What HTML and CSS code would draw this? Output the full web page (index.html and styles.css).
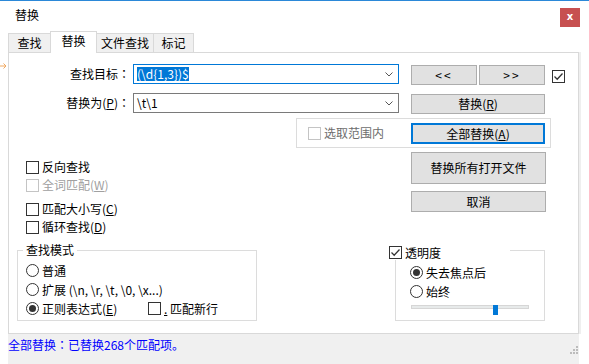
FILE: index.html
```html
<!DOCTYPE html>
<html lang="zh-CN">
<head>
    <meta charset="UTF-8">
    <meta name="viewport" content="width=device-width, initial-scale=1.0">
    <title>替换</title>
    <link rel="stylesheet" href="styles.css">
</head>
<body>
    <div class="titlebar">
        <span class="title">替换</span>
        <span class="close">x</span>
    </div>

    <div class="dialog">
        <div class="gutter">
            <svg class="marker" width="7" height="6" viewBox="0 0 7 6">
                <path d="M0 3h6M3.5 0.5L6 3L3.5 5.5" fill="none" stroke="#f0a860" stroke-width="1"/>
            </svg>
        </div>

        <div class="main">
            <div class="tabs">
                <span class="tab tab-find">查找</span>
                <span class="tab tab-replace active">替换</span>
                <span class="tab tab-files">文件查找</span>
                <span class="tab tab-mark">标记</span>
            </div>

            <div class="panel">
                <!-- 查找目标 -->
                <div class="row row-find">
                    <label class="field-label">查找目标<span class="colon" lang="ja">：</span></label>
                    <div class="combo focused">
                        <span class="value"><span class="sel">(\d{1,3})$</span></span>
                        <svg class="chevron" width="8" height="5" viewBox="0 0 8 5"><path d="M0.5 0.5L4 4L7.5 0.5" fill="none" stroke="#555"/></svg>
                    </div>
                    <button class="btn btn-prev">&lt;&lt;</button>
                    <button class="btn btn-next">&gt;&gt;</button>
                    <span class="box box-solo">
                        <svg width="11" height="11" viewBox="0 0 11 11"><path d="M1.5 5.5L4.2 8.2L9.5 2.5" fill="none" stroke="#333" stroke-width="1.3"/></svg>
                    </span>
                </div>

                <!-- 替换为 -->
                <div class="row row-replace">
                    <label class="field-label">替换为(<u>P</u>)<span class="colon" lang="ja">：</span></label>
                    <div class="combo">
                        <span class="value">\t\1</span>
                        <svg class="chevron" width="8" height="5" viewBox="0 0 8 5"><path d="M0.5 0.5L4 4L7.5 0.5" fill="none" stroke="#555"/></svg>
                    </div>
                    <button class="btn btn-wide">替换(<u>R</u>)</button>
                </div>

                <!-- 选取范围内 -->
                <div class="scope">
                    <span class="opt disabled"><span class="box"></span>选取范围内</span>
                    <button class="btn btn-wide btn-default">全部替换(<u>A</u>)</button>
                </div>

                <div class="lower">
                    <div class="options">
                        <div class="opt"><span class="box"></span>反向查找</div>
                        <div class="opt faded"><span class="box"></span>全词匹配(<u>W</u>)</div>
                        <div class="opt gap"><span class="box"></span>匹配大小写(<u>C</u>)</div>
                        <div class="opt"><span class="box"></span>循环查找(<u>D</u>)</div>
                    </div>
                    <div class="actions">
                        <button class="btn btn-tall">替换所有打开文件</button>
                        <button class="btn btn-cancel">取消</button>
                    </div>
                </div>

                <div class="bottom">
                    <fieldset class="mode">
                        <legend>查找模式</legend>
                        <div class="opt mode-row first"><span class="radio"></span>普通</div>
                        <div class="opt mode-row"><span class="radio"></span>扩展 (\n, \r, \t, \0, \x...)</div>
                        <div class="opt mode-row">
                            <span class="regex"><span class="radio on"></span>正则表达式(<u>E</u>)</span>
                            <span class="box"></span><u>.</u>&nbsp;匹配新行
                        </div>
                    </fieldset>

                    <div class="trans">
                        <div class="trans-title">
                            <span class="box">
                                <svg width="11" height="11" viewBox="0 0 11 11"><path d="M1.5 5.5L4.2 8.2L9.5 2.5" fill="none" stroke="#333" stroke-width="1.3"/></svg>
                            </span>透明度
                        </div>
                        <div class="opt trans-row first"><span class="radio on"></span>失去焦点后</div>
                        <div class="opt trans-row"><span class="radio"></span>始终</div>
                        <div class="slider">
                            <div class="track"></div>
                            <div class="thumb"></div>
                        </div>
                    </div>
                </div>
            </div>

            <div class="status">
                <span class="status-text">全部替换<span class="colon" lang="ja">：</span>已替换268个匹配项。</span>
                <svg class="grip" width="8" height="8" viewBox="0 0 8 8" fill="#bcbcbc">
                    <rect x="6" y="0" width="2" height="2"/>
                    <rect x="3" y="3" width="2" height="2"/>
                    <rect x="6" y="3" width="2" height="2"/>
                    <rect x="0" y="6" width="2" height="2"/>
                    <rect x="3" y="6" width="2" height="2"/>
                    <rect x="6" y="6" width="2" height="2"/>
                </svg>
            </div>
        </div>
    </div>
</body>
</html>
```

FILE: styles.css
```css
/* 基本设置 */
* {
    box-sizing: border-box;
}

body {
    margin: 0;
    width: 589px;
    height: 364px;
    overflow: hidden;
    background: #fff;
    border-top: 1px solid #2b88d8;
    font-family: "Noto Sans CJK SC", "Microsoft YaHei", sans-serif;
    font-size: 12px;
    line-height: 16px;
    color: #000;
}

u {
    text-decoration: underline;
}

/* 全角冒号居中显示 */
.colon {
    font-family: "Noto Sans CJK JP", sans-serif;
}

/* 标题栏 */
.titlebar {
    height: 30px;
    display: flex;
    justify-content: space-between;
    align-items: flex-start;
    padding: 0 9px 0 15px;
}

.title {
    margin-top: 6px;
}

.close {
    margin-top: 7px;
    width: 20px;
    height: 19px;
    background: #c75050;
    color: #fff;
    font-family: "DejaVu Sans", sans-serif;
    font-weight: bold;
    font-size: 10px;
    line-height: 17px;
    text-align: center;
}

.dialog {
    display: flex;
}

.gutter {
    width: 8px;
}

.marker {
    display: block;
    margin-top: 32px;
}

.main {
    width: 571px;
}

/* 选项卡 */
.tabs {
    display: flex;
    align-items: flex-end;
    height: 21px;
}

.tab {
    height: 19px;
    margin-left: -1px;
    border: 1px solid #d9d9d9;
    border-bottom: none;
    background: #f0f0f0;
    text-align: center;
    line-height: 18px;
}

.tab-find { width: 43px; margin-left: 0; }
.tab-replace { width: 47px; }
.tab-files { width: 58px; }
.tab-mark { width: 41px; }

.tab.active {
    height: 22px;
    margin-bottom: -1px;
    position: relative;
    z-index: 1;
    background: #fff;
    line-height: 18px;
}

.panel {
    height: 282px;
    border: 1px solid #d9d9d9;
    box-shadow: 2px 0 0 #efefef;
}

/* 输入行 */
.row {
    display: flex;
    align-items: flex-start;
}

.row-find {
    margin-top: 11px;
}

.row-replace {
    margin-top: 8px;
}

.field-label {
    width: 121px;
    margin-right: 3px;
    text-align: right;
    line-height: 20px;
}

.combo {
    width: 266px;
    height: 20px;
    border: 1px solid #7a7a7a;
    display: flex;
    align-items: center;
    justify-content: space-between;
    padding: 0 5px 0 3px;
}

.combo.focused {
    border-color: #0078d7;
}

.sel {
    display: inline-block;
    height: 14px;
    line-height: 14px;
    background: #0078d7;
    color: #fff;
}

.btn {
    height: 20px;
    margin-top: 1px;
    padding: 0;
    border: 1px solid #adadad;
    background: #e1e1e1;
    font: inherit;
    line-height: 18px;
    color: #000;
}

.btn-prev {
    width: 66px;
    margin-left: 12px;
    letter-spacing: 2px;
}

.btn-next {
    width: 66px;
    margin-left: 2px;
    letter-spacing: 2px;
}

.btn-wide {
    width: 134px;
    margin-left: 12px;
}

.btn-default {
    height: 21px;
    margin: 0 0 0 auto;
    border: 2px solid #0078d7;
    line-height: 17px;
}

/* 复选框与单选框 */
.box {
    width: 13px;
    height: 13px;
    flex: none;
    border: 1px solid #333;
    background: #fff;
    display: inline-flex;
    align-items: center;
    justify-content: center;
    margin-right: 3px;
}

.box-solo {
    margin: 6px 0 0 7px;
}

.radio {
    width: 13px;
    height: 13px;
    flex: none;
    border: 1px solid #333;
    border-radius: 50%;
    display: inline-flex;
    align-items: center;
    justify-content: center;
    margin-right: 3px;
}

.radio.on::after {
    content: "";
    width: 7px;
    height: 7px;
    border-radius: 50%;
    background: #333;
}

.opt {
    display: flex;
    align-items: center;
    height: 18px;
}

.opt.faded {
    color: #a0a0a0;
}

.opt.faded .box,
.opt.disabled .box {
    border-color: #c4c4c4;
}

.opt.disabled {
    color: #6d6d6d;
}

/* 选取范围 */
.scope {
    margin: 4px 0 0 287px;
    width: 255px;
    height: 30px;
    border: 1px solid #dcdcdc;
    display: flex;
    align-items: center;
    padding: 0 5px 0 11px;
}

.lower {
    display: flex;
}

.options {
    width: 402px;
    padding: 10px 0 0 17px;
}

.options .gap {
    margin-top: 6px;
}

.actions {
    width: 135px;
    display: flex;
    flex-direction: column;
    padding-top: 4px;
}

.actions .btn {
    width: 135px;
}

.btn-tall {
    height: 32px;
    margin-top: 0;
}

.btn-cancel {
    height: 21px;
    margin-top: 7px;
}

/* 查找模式与透明度 */
.bottom {
    display: flex;
    align-items: flex-start;
    margin-top: 6px;
}

.mode {
    width: 240px;
    height: 79px;
    margin: 0 0 0 8px;
    padding: 0 0 0 8px;
    border: 1px solid #dcdcdc;
}

.mode legend {
    padding: 0 3px;
    margin-left: -3px;
    line-height: 16px;
}

.mode-row {
    height: 19px;
}

.mode-row.first {
    margin-top: 3px;
}

.regex {
    width: 122px;
    display: flex;
    align-items: center;
}

.trans {
    position: relative;
    width: 150px;
    height: 71px;
    margin: 8px 0 0 138px;
    padding-left: 14px;
    border: 1px solid #dcdcdc;
}

.trans-title {
    position: absolute;
    left: -7px;
    top: -6px;
    width: 121px;
    height: 15px;
    background: #fff;
    display: flex;
    align-items: center;
}

.trans-row.first {
    margin-top: 12px;
}

.trans-row {
    height: 19px;
}

.slider {
    position: relative;
    width: 118px;
    height: 10px;
    margin: 2px 0 0 1px;
}

.track {
    margin-top: 4px;
    height: 4px;
    background: #e7eaea;
    border: 1px solid #d6d6d6;
}

.thumb {
    position: absolute;
    left: 82px;
    top: 0;
    width: 5px;
    height: 10px;
    background: #0078d7;
}

/* 状态栏 */
.status {
    height: 30px;
    background: #f0f0f0;
    display: flex;
    justify-content: space-between;
    padding: 3px 1px 0 0;
    color: #0000ff;
}

.grip {
    align-self: flex-end;
    margin-bottom: 10px;
}
```
